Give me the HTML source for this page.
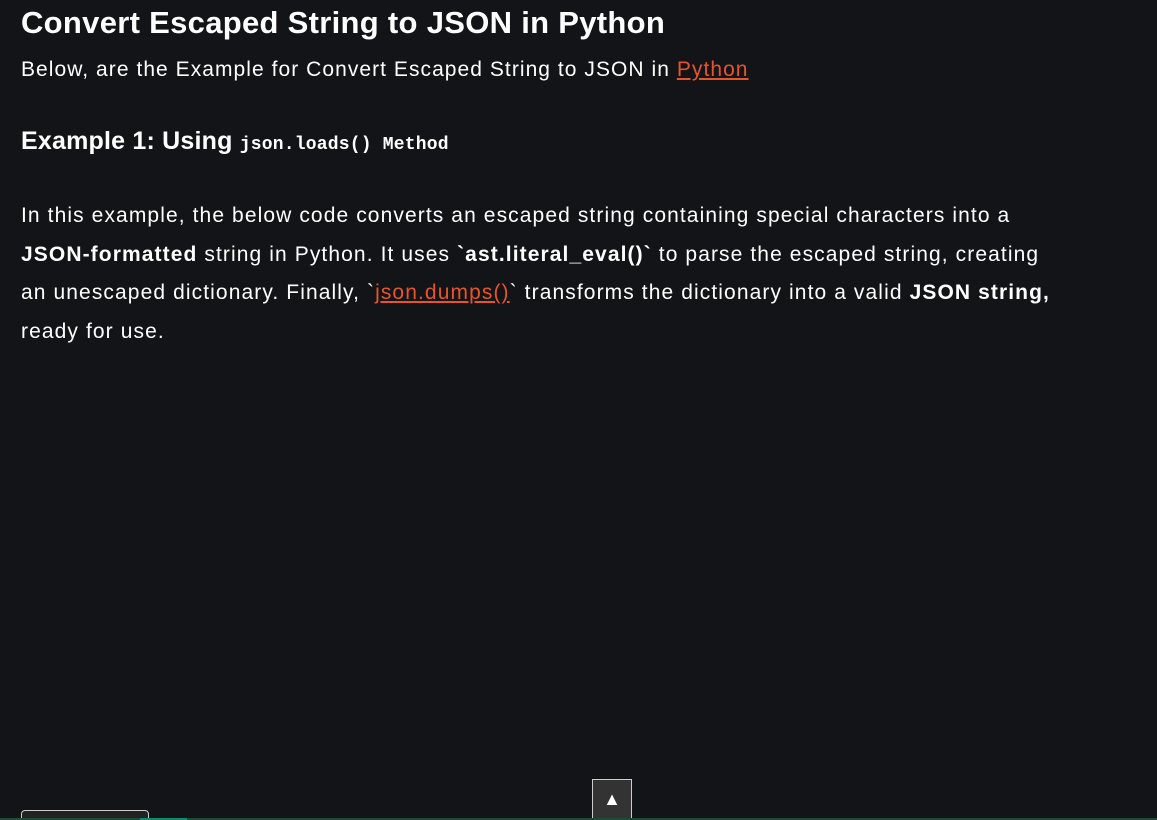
<!DOCTYPE html>
<html><head><meta charset="utf-8"><style>
html,body{margin:0;width:1157px;height:820px;overflow:hidden}
body{background:#131417;position:relative;font-family:"Liberation Sans",sans-serif;color:#fff}
h1{position:absolute;left:21px;top:5px;margin:0;font-size:31px;font-weight:bold;letter-spacing:0.3px}
.sub{position:absolute;left:21px;top:58px;font-size:21px;letter-spacing:1.05px}
a{color:#e8542a;text-decoration:underline}
h3{position:absolute;left:21px;top:127px;margin:0;font-size:25px;font-weight:bold;letter-spacing:0.2px}
code{font-family:"Liberation Mono",monospace;font-size:18px;font-weight:bold}
.p{position:absolute;left:21px;top:197px;font-size:21px;line-height:38.5px;white-space:nowrap;letter-spacing:1.1px}
.top{position:absolute;left:592px;top:779px;width:40px;height:41px;background:#333;border:1px solid #ccc;border-bottom:none;box-sizing:border-box;color:#fff;text-align:center;font-size:18px;line-height:38px}
.box{position:absolute;left:21px;top:810px;width:128px;height:12px;border:1px solid #ccc;border-radius:4px;background:#222;box-sizing:border-box}
.bar{position:absolute;left:0;top:818px;width:1157px;height:2px;background:#1e4a3a}
.bar2{position:absolute;left:140px;top:818px;width:47px;height:2px;background:#0f8a6a}
</style></head><body>
<h1>Convert Escaped String to JSON in Python</h1>
<div class="sub">Below, are the Example for Convert Escaped String to JSON in <a>Python</a></div>
<h3>Example 1: Using <code>json.loads() Method</code></h3>
<div class="p">In this example, the below code converts an escaped string containing special characters into a<br><b>JSON-formatted</b> string in Python. It uses <b>`ast.literal_eval()`</b> to parse the escaped string, creating<br>an unescaped dictionary. Finally, `<a>json.dumps()</a>` transforms the dictionary into a valid <b>JSON string,</b><br>ready for use.</div>
<div class="box"></div>
<div class="top">▲</div>
<div class="bar"></div><div class="bar2"></div>
</body></html>
